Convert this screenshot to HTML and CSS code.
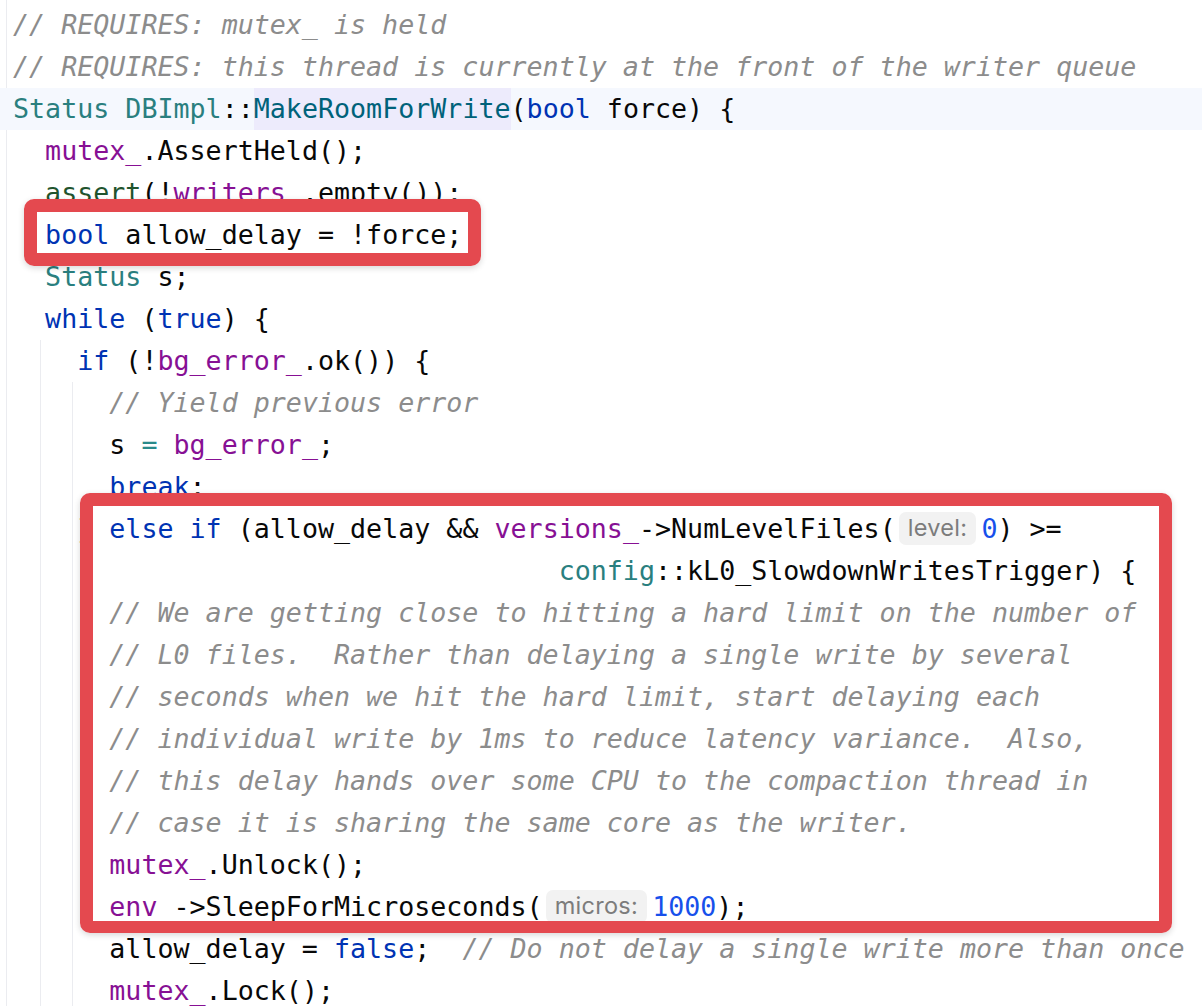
FILE: index.html
```html
<!DOCTYPE html>
<html>
<head>
<meta charset="utf-8">
<link rel="stylesheet" href="styles.css">
</head>
<body>
<div class="editor">
  <div class="line"><span class="cm">// REQUIRES: mutex_ is held</span></div>
  <div class="line"><span class="cm">// REQUIRES: this thread is currently at the front of the writer queue</span></div>
  <div class="line current"><span class="ty">Status</span> <span class="ty">DBImpl</span>::<span class="fn hl">MakeRoomForWrite</span>(<span class="kw">bool</span> force) {</div>
  <div class="line">  <span class="mb">mutex_</span>.AssertHeld();</div>
  <div class="line">  <span class="mc">assert</span>(!<span class="mb">writers_</span>.empty());</div>
  <div class="line">  <span class="kw">bool</span> allow_delay = !force;</div>
  <div class="line">  <span class="ty">Status</span> s;</div>
  <div class="line">  <span class="kw">while</span> (<span class="kw">true</span>) {</div>
  <div class="guide g1">
    <div class="line">    <span class="kw">if</span> (!<span class="mb">bg_error_</span>.ok()) {</div>
    <div class="guide g2">
      <div class="line">      <span class="cm">// Yield previous error</span></div>
      <div class="line">      s <span class="op">=</span> <span class="mb">bg_error_</span>;</div>
      <div class="line">      <span class="kw">break</span>;</div>
      <div class="line">    } <span class="kw">else</span> <span class="kw">if</span> (allow_delay &amp;&amp; <span class="mb">versions_</span>-&gt;NumLevelFiles(<span class="hint">level:</span><span class="nm">0</span>) &gt;=</div>
      <div class="line">                                  <span class="ty">config</span>::kL0_SlowdownWritesTrigger) {</div>
      <div class="line">      <span class="cm">// We are getting close to hitting a hard limit on the number of</span></div>
      <div class="line">      <span class="cm">// L0 files.  Rather than delaying a single write by several</span></div>
      <div class="line">      <span class="cm">// seconds when we hit the hard limit, start delaying each</span></div>
      <div class="line">      <span class="cm">// individual write by 1ms to reduce latency variance.  Also,</span></div>
      <div class="line">      <span class="cm">// this delay hands over some CPU to the compaction thread in</span></div>
      <div class="line">      <span class="cm">// case it is sharing the same core as the writer.</span></div>
      <div class="line">      <span class="mb">mutex_</span>.Unlock();</div>
      <div class="line">      <span class="mb">env_</span>-&gt;SleepForMicroseconds(<span class="hint">micros:</span><span class="nm">1000</span>);</div>
      <div class="line">      allow_delay = <span class="kw">false</span>;  <span class="cm">// Do not delay a single write more than once</span></div>
      <div class="line">      <span class="mb">mutex_</span>.Lock();</div>
    </div>
  </div>
  <div class="mark mark-one"></div>
  <div class="mark mark-two"></div>
</div>
</body>
</html>
```
FILE: styles.css
```css
html, body {
  margin: 0;
  padding: 0;
  background: #ffffff;
}

body {
  width: 1202px;
  height: 1006px;
  overflow: hidden;
}

.editor {
  position: relative;
  padding-top: 4px;
  font-family: "DejaVu Sans Mono", "Liberation Mono", monospace;
  font-size: 26.67px;
  color: #080808;
  background: linear-gradient(#ebecf0, #ebecf0) no-repeat 6px 0 / 1px 100%;
}

.line {
  height: 42px;
  line-height: 42px;
  padding-left: 13px;
  white-space: pre;
  overflow: visible;
}

.line.current {
  background: #f5f8fe;
}

.guide.g1 {
  background: linear-gradient(#ebecf0, #ebecf0) no-repeat 40px 0 / 1px 100%;
}

.guide.g2 {
  background: linear-gradient(#ebecf0, #ebecf0) no-repeat 72px 0 / 1px 100%;
}

.cm { color: #8c8c8c; font-style: italic; }
.kw { color: #0033b3; }
.ty { color: #2a7f7f; }
.fn { color: #00627a; }
.mb { color: #871094; }
.mc { color: #1f542e; }
.nm { color: #1750eb; }
.op { color: #2a8a8a; }

.hl {
  background: #edebfc;
  display: inline-block;
  height: 42px;
  vertical-align: top;
}

.hint {
  display: inline-block;
  font-family: "Inter", "Noto Sans", sans-serif;
  font-style: normal;
  font-size: 23.5px;
  letter-spacing: 0.3px;
  color: #7c7c7c;
  background: #f2f2f2;
  border-radius: 7px;
  height: 33px;
  line-height: 31px;
  padding: 0 9px;
  margin: 0 5px 0 3px;
  vertical-align: 2px;
  box-sizing: border-box;
}

.mark {
  position: absolute;
  border: 13px solid #e4494f;
  border-radius: 10px;
  box-shadow: 0 2px 6px rgba(0, 0, 0, 0.16);
  box-sizing: border-box;
}

.mark-one {
  left: 24px;
  top: 199px;
  width: 457px;
  height: 67px;
}

.mark-two {
  left: 80px;
  top: 493px;
  width: 1092px;
  height: 440px;
  border-bottom-width: 12px;
}
```
